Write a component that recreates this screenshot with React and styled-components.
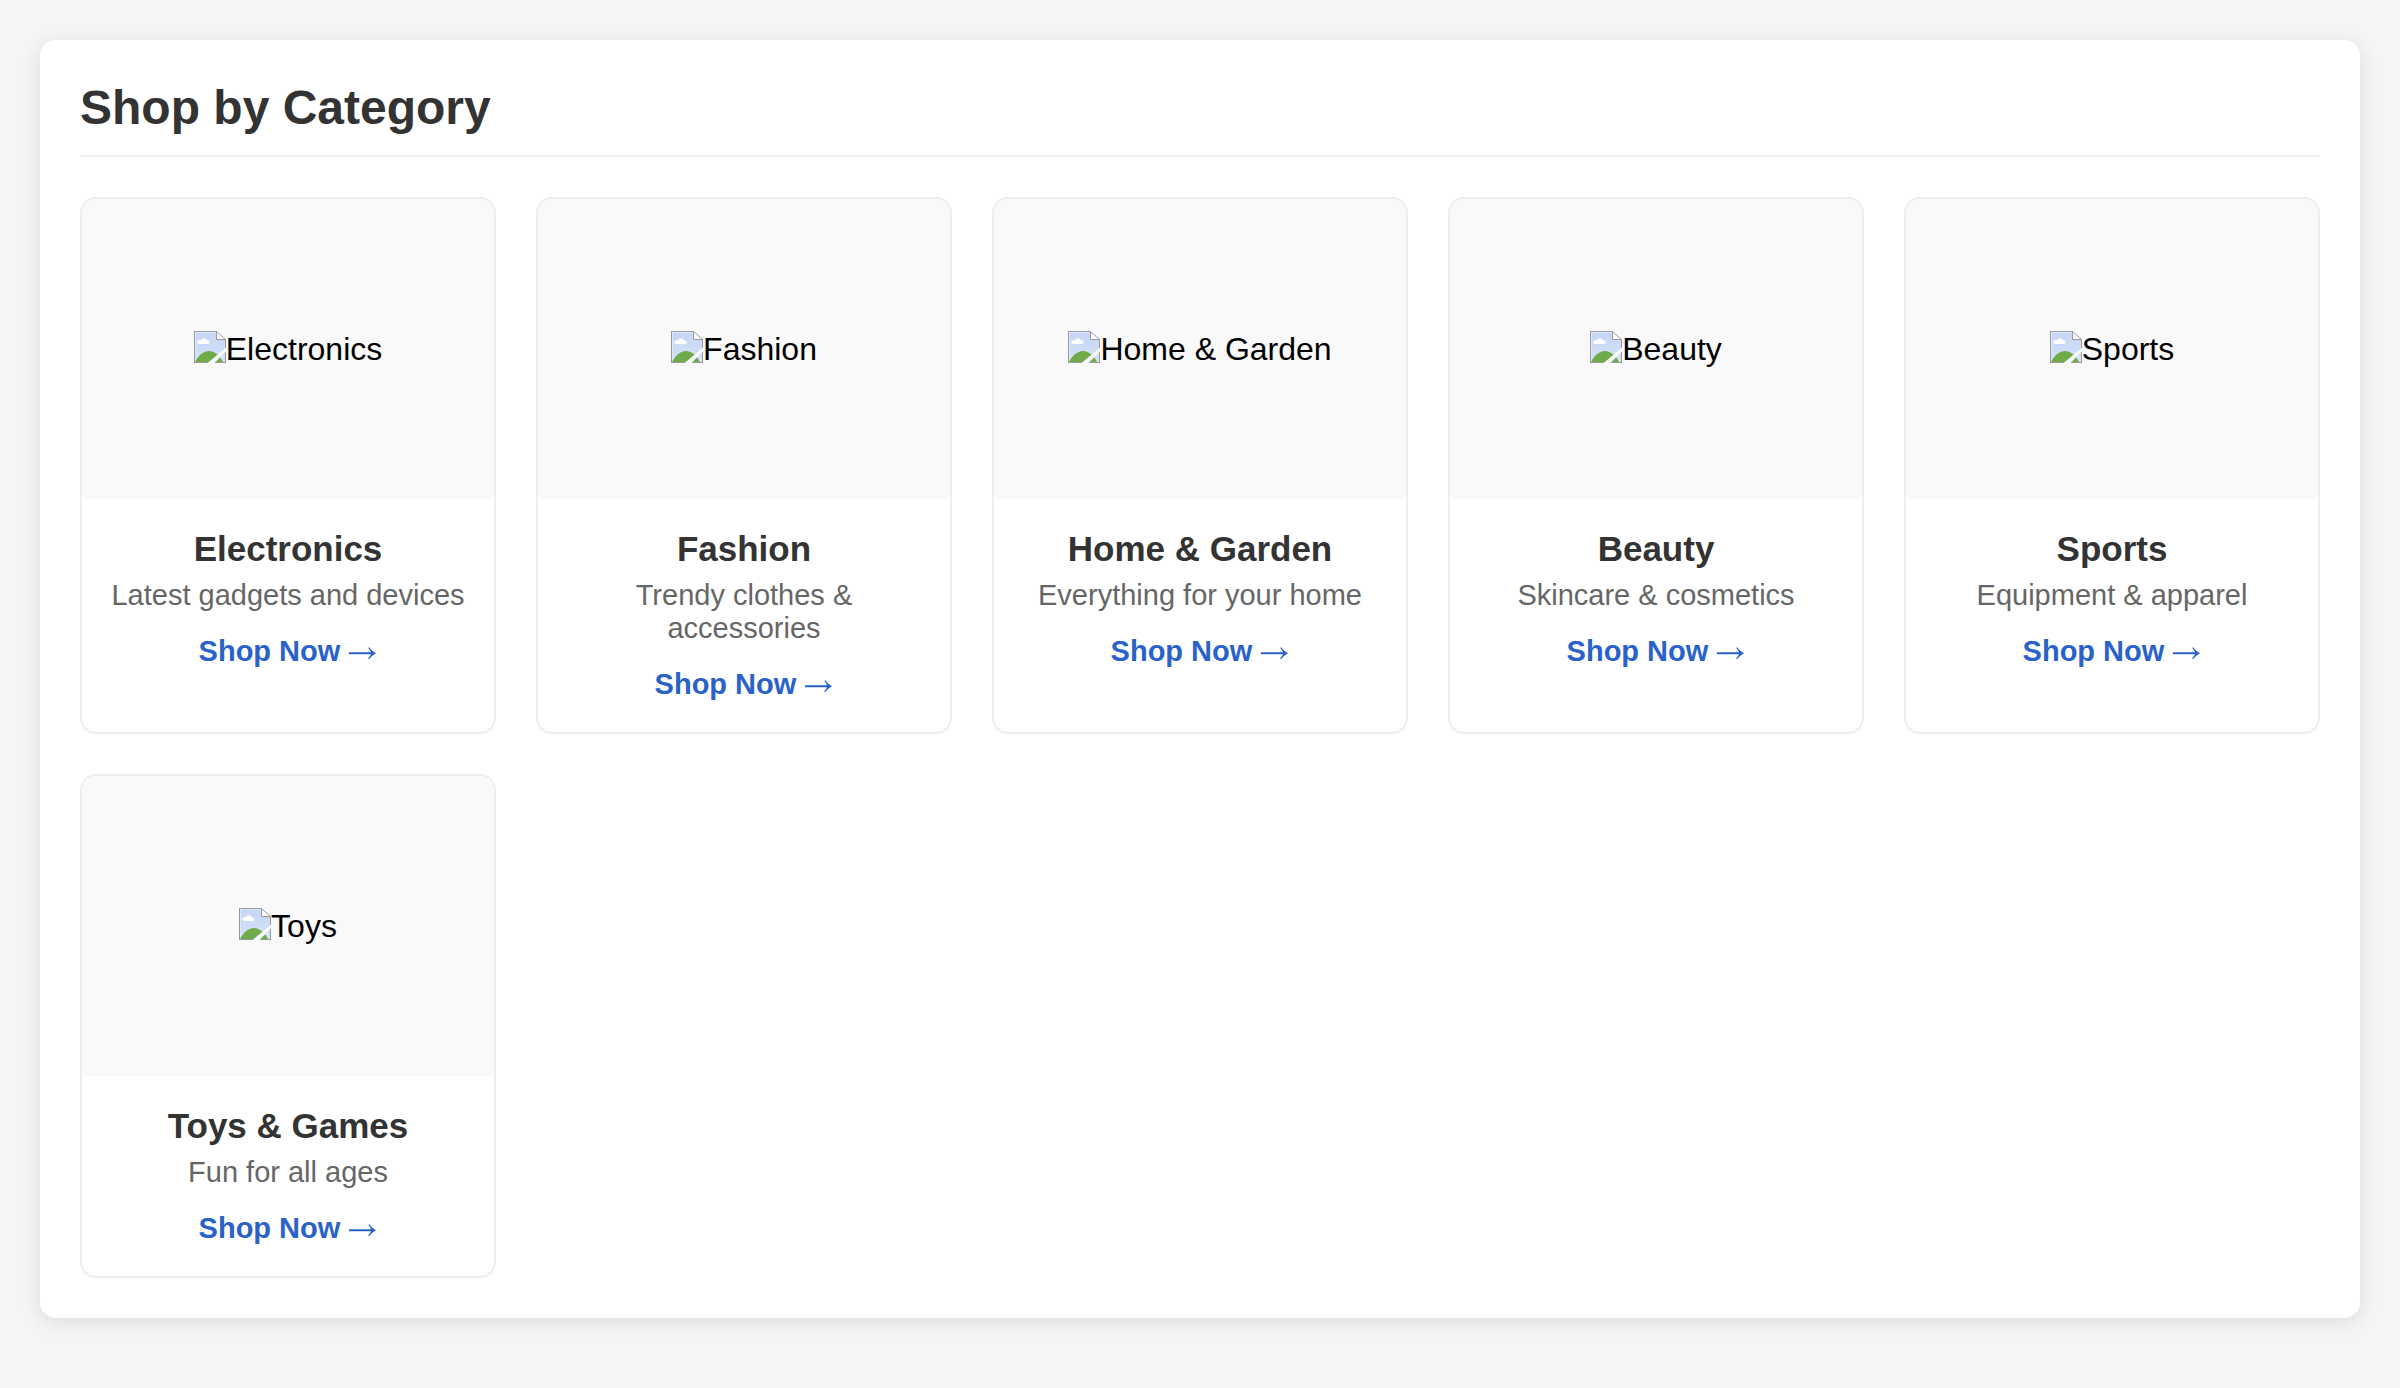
import React from 'react';
import styled, { createGlobalStyle } from 'styled-components';

const GlobalStyle = createGlobalStyle`
  * {
    box-sizing: border-box;
  }

  body {
    margin: 0;
    background: #f5f5f5;
    font-family: 'Liberation Sans', Arial, sans-serif;
    font-size: 32px;
  }
`;

const Page = styled.main`
  padding: 40px;
`;

const Panel = styled.section`
  padding: 40px;
  border-radius: 16px;
  background: #fff;
  box-shadow: 0 4px 20px rgba(0, 0, 0, 0.1);
`;

const PanelTitle = styled.h1`
  margin: 0 0 40px;
  padding-bottom: 20px;
  border-bottom: 2px solid #eee;
  color: #333;
  font-size: 48px;
  line-height: 55px;
`;

const CategoryGrid = styled.div`
  display: grid;
  grid-template-columns: repeat(auto-fill, minmax(400px, 1fr));
  gap: 40px;
`;

const Card = styled.article`
  overflow: hidden;
  border: 2px solid #eee;
  border-radius: 16px;
  background: #fff;
  text-align: center;
`;

const Thumbnail = styled.div`
  display: flex;
  align-items: center;
  justify-content: center;
  height: 300px;
  background: #f9f9f9;
`;

const Placeholder = styled.div`
  display: flex;
  color: #000;
  line-height: 36px;
`;

const PlaceholderIcon = styled.svg`
  flex: none;
  width: 32px;
  height: 32px;
`;

const CardBody = styled.div`
  padding: 30px 24px;
  line-height: 37px;
`;

const CardTitle = styled.h2`
  margin: 0 0 10px;
  color: #333;
  font-size: 35px;
  line-height: 40px;
`;

const Description = styled.p`
  margin: 0 0 20px;
  color: #666;
  font-size: 29px;
  line-height: 33px;
`;

const ShopLink = styled.a`
  color: #2962c8;
  font-size: 29px;
  font-weight: bold;
  line-height: 33px;
  text-decoration: none;
`;

const ArrowIcon = styled.svg`
  width: 29px;
  height: 16px;
  fill: currentColor;
`;

const categories = [
  { title: 'Electronics', alt: 'Electronics', text: 'Latest gadgets and devices' },
  { title: 'Fashion', alt: 'Fashion', text: 'Trendy clothes & accessories' },
  { title: 'Home & Garden', alt: 'Home & Garden', text: 'Everything for your home' },
  { title: 'Beauty', alt: 'Beauty', text: 'Skincare & cosmetics' },
  { title: 'Sports', alt: 'Sports', text: 'Equipment & apparel' },
  { title: 'Toys & Games', alt: 'Toys', text: 'Fun for all ages' },
];

function MissingImage({ id }) {
  const sky = `sky-${id}`;
  const sheet = `sheet-${id}`;
  return (
    <PlaceholderIcon viewBox="0 0 32 32" aria-hidden="true">
      <defs>
        <linearGradient id={sky} x1="0" y1="0" x2="0" y2="1">
          <stop offset="0" stopColor="#c5d5f5" />
          <stop offset="1" stopColor="#d5e2f8" />
        </linearGradient>
        <clipPath id={sheet}>
          <path d="M0 0H22L32 9V16.5L13.5 32H0Z" />
          <path d="M32 20.5V32H20.5Z" />
        </clipPath>
      </defs>
      <g clipPath={`url(#${sheet})`}>
        <rect width="32" height="32" fill="#dfe9fa" />
        <rect x="2" y="2" width="29" height="29" fill={`url(#${sky})`} />
        <path d="M5 13a1.9 1.9 0 0 1 .4-3.8q.8 0 1.4.2a3.3 3.3 0 0 1 6.2.2a1.8 1.8 0 0 1 1.4 3.4Z" fill="#fff" />
        <path d="M1 31C4 25 9 20 15 20C21 20 26 25 29 31Z" fill="#6fab48" />
        <path d="M0.5 0V32M0 31.5H32M31.5 8V32M0 0.5H22.5" fill="none" stroke="#999" />
      </g>
      <path d="M22.5 0.5V8.5H31.5Z" fill="#fff" stroke="#999" strokeLinejoin="round" />
    </PlaceholderIcon>
  );
}

function Arrow() {
  return (
    <ArrowIcon viewBox="0 0 29 16" aria-hidden="true">
      <path d="M1 7.2H23C22.4 5.6 21.4 4.2 20.2 3.1L21.2 2.2C23.3 4.9 25.4 6.8 28 8.2C25.4 9.6 23.3 11.5 21.2 14.2L20.2 13.3C21.4 12.2 22.4 10.8 23 9.2H1Z" />
    </ArrowIcon>
  );
}

function CategoryCard({ category, id }) {
  return (
    <Card>
      <Thumbnail>
        <Placeholder>
          <MissingImage id={id} />
          <span>{category.alt}</span>
        </Placeholder>
      </Thumbnail>
      <CardBody>
        <CardTitle>{category.title}</CardTitle>
        <Description>{category.text}</Description>
        <ShopLink href="#">
          Shop Now <Arrow />
        </ShopLink>
      </CardBody>
    </Card>
  );
}

export default function App() {
  return (
    <>
      <GlobalStyle />
      <Page>
        <Panel>
          <PanelTitle>Shop by Category</PanelTitle>
          <CategoryGrid>
            {categories.map((category, index) => (
              <CategoryCard key={category.title} category={category} id={index} />
            ))}
          </CategoryGrid>
        </Panel>
      </Page>
    </>
  );
}
